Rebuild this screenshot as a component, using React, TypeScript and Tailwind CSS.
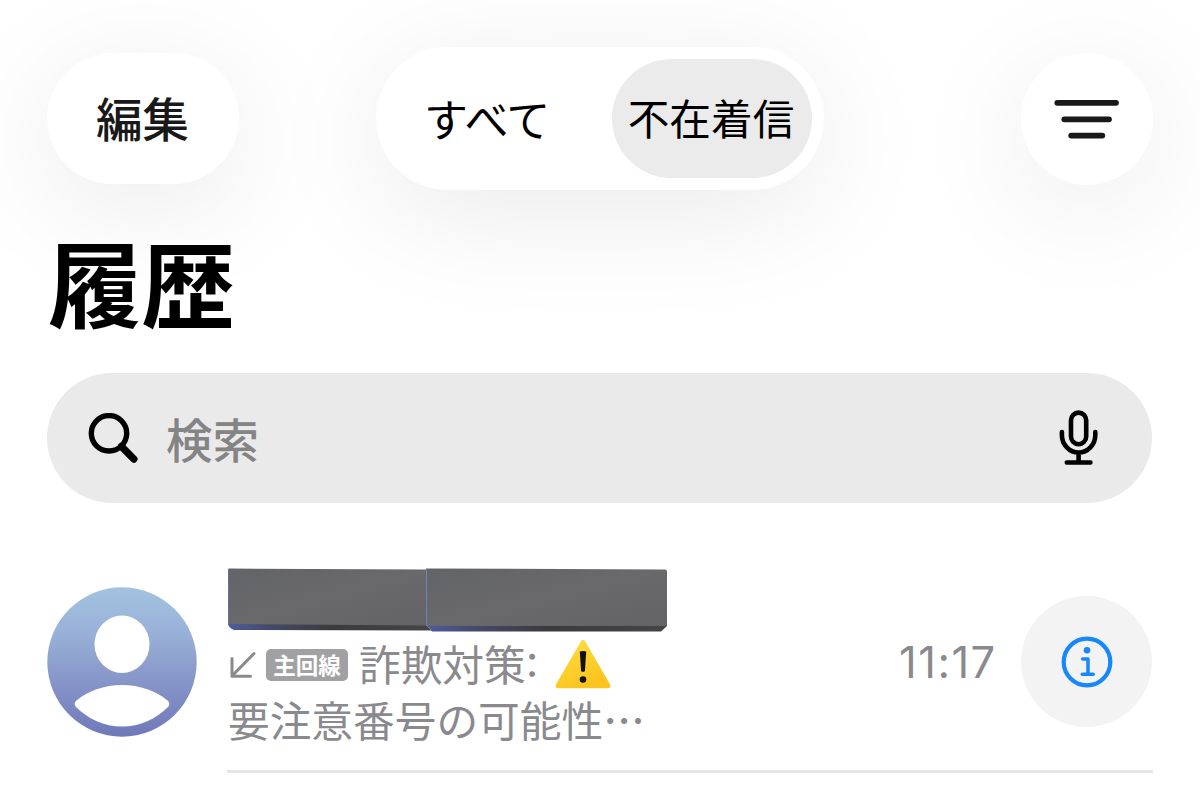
import React from "react";

function FilterIcon() {
  return (
    <svg width="66" height="40" viewBox="0 0 66 40" fill="none" stroke="#191919" strokeWidth="5.800" strokeLinecap="round">
      <path d="M3.300 3.800H62M10.300 20.300H55M17.200 36.600H48.300" />
    </svg>
  );
}

function SearchIcon() {
  return (
    <svg width="50" height="51" viewBox="0 0 50 51" fill="none" stroke="#000" strokeLinecap="round">
      <circle cx="21" cy="20.300" r="17.700" strokeWidth="5.400" />
      <path d="M33.500 33.500L45.800 46" strokeWidth="7.400" />
    </svg>
  );
}

function MicIcon() {
  return (
    <svg width="40" height="56" viewBox="0 0 40 56" fill="none" stroke="#000" strokeWidth="4.600" strokeLinecap="round">
      <rect x="12" y="2.600" width="15.200" height="31.600" rx="7.600" />
      <path d="M2.900 22V25A16.700 17.500 0 0 0 36.300 25V22M19.600 43V52.500M7.800 52.500H31.400" />
    </svg>
  );
}

function Avatar() {
  return (
    <svg width="150" height="150" viewBox="0 0 150 150" className="shrink-0">
      <defs>
        <linearGradient id="avatar" x1="0" y1="0" x2="0" y2="1">
          <stop offset="0" stopColor="#a2c3e0" />
          <stop offset="0.3" stopColor="#99b1d8" />
          <stop offset="0.6" stopColor="#8898ca" />
          <stop offset="1" stopColor="#6f78b9" />
        </linearGradient>
      </defs>
      <circle cx="75" cy="75" r="74.700" fill="url(#avatar)" />
      <ellipse cx="75" cy="57.300" rx="27.500" ry="28.700" fill="#fff" />
      <path d="M29.500 113.500C41 104 57 98 75 98C93 98 109 104 120.500 113.500Q124 116.500 121 120C109 132 93 139.500 75 139.500C57 139.500 41 132 29 120Q26 116.500 29.500 113.500Z" fill="#fff" />
    </svg>
  );
}

function RedactedName() {
  return (
    <svg width="440" height="64" viewBox="0 0 440 64" className="block">
      <defs>
        <linearGradient id="edge" x1="0" y1="0" x2="1" y2="0">
          <stop offset="0" stopColor="#4b5da0" />
          <stop offset="0.2" stopColor="#46496a" />
          <stop offset="0.5" stopColor="#3b3b3e" />
          <stop offset="1" stopColor="#454548" />
        </linearGradient>
        <linearGradient id="face" x1="0" y1="0" x2="1" y2="1">
          <stop offset="0" stopColor="#636467" />
          <stop offset="0.5" stopColor="#69696b" />
          <stop offset="1" stopColor="#636366" />
        </linearGradient>
      </defs>
      <path d="M0 55H200L204 62.500L6 62Q1 60 0 56Z" fill="url(#edge)" />
      <path d="M0 1.500Q0 0.500 1 0.500L199 1.500V57.500L0 56Z" fill="url(#face)" />
      <path d="M198 56H439V58L433 63.500H204Z" fill="url(#edge)" />
      <path d="M198 0.500L437 1.500Q439 1.500 439 3.500V58H198Z" fill="url(#face)" />
      <path d="M198.500 1.500V57L203 62" stroke="#7183b0" strokeWidth="1" fill="none" />
      <path d="M0.500 1.500V56" stroke="#65719a" strokeWidth="1" fill="none" />
    </svg>
  );
}

function MissedArrow() {
  return (
    <svg width="28" height="28" viewBox="0 0 28 28" fill="none" stroke="#8a8a8e" strokeWidth="3" strokeLinecap="round" strokeLinejoin="round">
      <path d="M26 2.500L4 25M4 7.500V25.200H22.500" />
    </svg>
  );
}

function WarningIcon() {
  return (
    <svg width="56" height="50" viewBox="0 0 56 50" className="shrink-0">
      <defs>
        <linearGradient id="warn" x1="0" y1="0" x2="0.5" y2="1">
          <stop offset="0" stopColor="#ffe04c" />
          <stop offset="0.5" stopColor="#fdd22f" />
          <stop offset="1" stopColor="#fbc41e" />
        </linearGradient>
      </defs>
      <path d="M25.800 2.500Q28 -1 30.200 2.500L54.800 45Q56.500 49 53 49.300H3Q-0.500 49 1.200 45Z" fill="url(#warn)" />
      <path d="M24.800 12.500Q28 11.500 31.200 12.500L29.900 32.300Q28 33.300 26.100 32.300Z" fill="#111" />
      <circle cx="28" cy="40.500" r="3.300" fill="#111" />
    </svg>
  );
}

function InfoIcon() {
  return (
    <svg width="52" height="52" viewBox="0 0 52 52" fill="none" stroke="#1688fb" strokeLinecap="round" strokeLinejoin="round">
      <circle cx="26" cy="26" r="23.300" strokeWidth="4.200" />
      <circle cx="26" cy="14.300" r="3.300" fill="#1688fb" stroke="none" />
      <path d="M21.600 23H27V38.300M21.200 38.300H32.200" strokeWidth="3.500" />
    </svg>
  );
}

export default function App() {
  return (
    <div className="flex h-[802px] w-[1200px] flex-col overflow-hidden bg-white font-['Noto_Sans_CJK_JP',sans-serif] whitespace-nowrap">
      <header className="flex h-[190px] shrink-0 items-center pt-[47px] pl-[47px]">
        <button className="flex h-[131px] w-[192px] items-center justify-center rounded-full bg-white pr-px pb-0.5 text-[46.500px] leading-none font-medium text-[#191919] shadow-[0_22px_120px_rgba(0,0,0,0.085)]">
          編集
        </button>
        <div className="ml-[137px] flex h-[143px] w-[448px] items-center justify-between rounded-full bg-white pr-3 pl-[48px] text-[41.700px] leading-none text-black shadow-[0_22px_120px_rgba(0,0,0,0.085)]">
          <button className="pb-0.5 text-[44px] tracking-[-0.500px]">すべて</button>
          <button className="flex h-[119px] w-[200px] items-center justify-center rounded-full bg-[#ebebeb] pr-[2px] pb-0.5">不在着信</button>
        </div>
        <button className="ml-[197px] flex size-[132px] items-center justify-center rounded-full bg-white shadow-[0_22px_120px_rgba(0,0,0,0.085)]">
          <FilterIcon />
        </button>
      </header>

      <h1 className="mt-[41px] ml-[48px] h-[100px] text-[93.500px] leading-[100px] font-bold text-black">履歴</h1>

      <div className="mx-[47px] mt-[42px] flex h-[130px] w-[1105px] shrink-0 items-center rounded-full bg-[#eaeaea] pr-[53px] pl-[41px]">
        <SearchIcon />
        <span className="ml-[28px] text-[46.500px] leading-none font-medium text-[#848484]">検索</span>
        <span className="ml-auto">
          <MicIcon />
        </span>
      </div>

      <main className="mt-[65px] flex h-[205px] pl-[47px]">
        <div className="mt-[19px]">
          <Avatar />
        </div>
        <div className="ml-[30px] flex w-[926px] flex-col border-b-[3px] border-[#e5e5e6]">
          <div className="flex">
            <div className="w-[672px] pl-px text-[41.700px] text-[#8a8a8e]">
              <RedactedName />
              <div className="flex h-[62px] items-center">
                <div className="flex items-center pt-1">
                  <MissedArrow />
                  <span className="ml-[10px] flex h-8 w-[82px] items-center justify-center rounded-[5px] bg-[#a1a1a3] pb-px text-[22.500px] leading-none font-bold text-white">
                    主回線
                  </span>
                </div>
                <span className="ml-[11px] leading-[60px]">詐欺対策</span>
                <span className="w-[29px] pb-[5px] font-['Inter'] text-[44px]">:</span>
                <div className="pt-0.5">
                  <WarningIcon />
                </div>
              </div>
              <div className="leading-[50px]">
                要注意番号の可能性<span className="font-medium">…</span>
              </div>
            </div>
            <div className="mt-[64px] w-[122px] font-['Inter'] text-[43.500px] leading-[60px] tracking-[1.500px] text-[#8a8a8e]">11:17</div>
            <button className="mt-[28px] flex size-[131px] shrink-0 items-center justify-center rounded-full bg-[#f3f3f3]">
              <InfoIcon />
            </button>
          </div>
        </div>
      </main>
    </div>
  );
}
